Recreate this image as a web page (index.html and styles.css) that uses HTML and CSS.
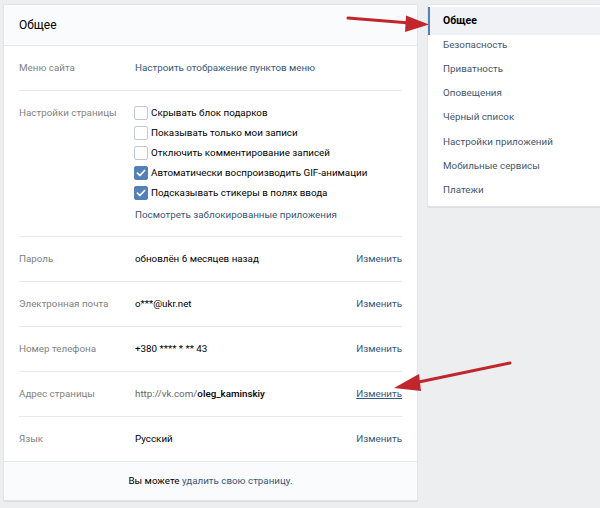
FILE: index.html
```html
<!DOCTYPE html>
<html lang="ru">
<head>
<meta charset="utf-8">
<title>Общее</title>
<link rel="stylesheet" href="styles.css">
</head>
<body>
<div class="page">
  <div class="main">
    <div class="header">Общее</div>
    <div class="rows">
      <div class="row">
        <div class="label">Меню сайта</div>
        <div class="value"><a class="link">Настроить отображение пунктов меню</a></div>
      </div>
      <div class="row row-checks">
        <div class="label">Настройки страницы</div>
        <div class="value">
          <div class="check"><span class="box"></span>Скрывать блок подарков</div>
          <div class="check"><span class="box"></span>Показывать только мои записи</div>
          <div class="check"><span class="box"></span>Отключить комментирование записей</div>
          <div class="check"><span class="box on"><svg viewBox="0 0 14 14" width="14" height="14"><path d="M3.4 7.1 L5.9 9.5 L10.6 4.5" fill="none" stroke="#fff" stroke-width="1.7" stroke-linecap="round" stroke-linejoin="round"/></svg></span>Автоматически воспроизводить GIF-анимации</div>
          <div class="check"><span class="box on"><svg viewBox="0 0 14 14" width="14" height="14"><path d="M3.4 7.1 L5.9 9.5 L10.6 4.5" fill="none" stroke="#fff" stroke-width="1.7" stroke-linecap="round" stroke-linejoin="round"/></svg></span>Подсказывать стикеры в полях ввода</div>
          <div class="blocked"><a class="link">Посмотреть заблокированные приложения</a></div>
        </div>
      </div>
      <div class="row">
        <div class="label">Пароль</div>
        <div class="value">обновлён 6 месяцев назад</div>
        <a class="link change">Изменить</a>
      </div>
      <div class="row">
        <div class="label">Электронная почта</div>
        <div class="value">o***@ukr.net</div>
        <a class="link change">Изменить</a>
      </div>
      <div class="row">
        <div class="label">Номер телефона</div>
        <div class="value">+380 **** * ** 43</div>
        <a class="link change">Изменить</a>
      </div>
      <div class="row">
        <div class="label">Адрес страницы</div>
        <div class="value"><span class="muted">http://vk.com/</span><span class="strong">oleg_kaminskiy</span></div>
        <a class="link change underlined">Изменить</a>
      </div>
      <div class="row">
        <div class="label">Язык</div>
        <div class="value">Русский</div>
        <a class="link change">Изменить</a>
      </div>
    </div>
    <div class="footer">Вы можете <a class="link">удалить свою страницу</a>.</div>
  </div>
  <div class="menu">
    <div class="item active">Общее</div>
    <div class="item">Безопасность</div>
    <div class="item">Приватность</div>
    <div class="item">Оповещения</div>
    <div class="item">Чёрный список</div>
    <div class="item">Настройки приложений</div>
    <div class="item">Мобильные сервисы</div>
    <div class="item">Платежи</div>
  </div>
</div>
<svg class="arrows" width="600" height="508" viewBox="0 0 600 508">
  <line x1="348" y1="18" x2="410" y2="23" stroke="#c0262c" stroke-width="3" stroke-linecap="round"/>
  <polygon points="429,24.5 406,15.5 405,32" fill="#c0262c"/>
  <line x1="510" y1="363" x2="414" y2="383" stroke="#c0262c" stroke-width="3" stroke-linecap="round"/>
  <polygon points="394,388 419,374 421,391" fill="#c0262c"/>
</svg>
</body>
</html>
```

FILE: styles.css
```css
html, body {
  margin: 0;
  padding: 0;
}
body {
  background: #edeef0;
  font-family: Roboto, "Noto Sans", sans-serif;
  font-size: 9.8px;
  color: #000;
  width: 600px;
  height: 508px;
  overflow: hidden;
  position: relative;
}
.page {
  display: flex;
  align-items: flex-start;
  gap: 9px;
  padding: 4px 0 0 3px;
}
.main {
  width: 413px;
  flex: none;
  background: #fff;
  border: 1px solid #e3e4e8;
  border-radius: 2px;
  box-shadow: 0 1px 0 #dcdee3;
}
.header {
  height: 40px;
  line-height: 40px;
  padding-left: 15px;
  font-size: 12px;
  color: #000;
  background: #fafbfc;
  border-bottom: 1px solid #e7e8ec;
}
.rows {
  padding: 0 15px;
}
.row {
  display: flex;
  align-items: flex-start;
  padding: 13px 0 14px 0;
  line-height: 17px;
  border-top: 1px solid #e7e8ec;
}
.rows .row:first-child {
  border-top: none;
  padding-top: 13px;
  padding-bottom: 14px;
}
.label {
  width: 116px;
  flex: none;
  color: #828282;
}
.value {
  flex: 1;
  color: #000;
}
.link {
  color: #36577a;
  text-decoration: none;
}
.change {
  flex: none;
}
.underlined {
  text-decoration: underline;
}
.muted {
  color: #656565;
}
.strong {
  font-weight: 500;
}
.row-checks {
  padding: 12px 0 11px 0;
  line-height: 20px;
}
.row-checks .label {
  line-height: 20px;
}
.check {
  display: flex;
  align-items: center;
  height: 20px;
}
.box {
  width: 12px;
  height: 12px;
  border: 1px solid #c1c9d1;
  border-radius: 2px;
  background: #fff;
  margin-right: 3px;
  margin-left: -1px;
  flex: none;
  position: relative;
}
.box.on {
  background: #5181b8;
  border-color: #5181b8;
}
.box svg {
  position: absolute;
  left: -1px;
  top: -1px;
}
.blocked {
  margin-top: 2px;
  line-height: 20px;
}
.footer {
  height: 38px;
  line-height: 38px;
  text-align: center;
  background: #fafbfc;
  border-top: 1px solid #e7e8ec;
  color: #000;
}
.menu {
  width: 200px;
  flex: none;
  background: #fff;
  border: 1px solid #e3e4e8;
  border-radius: 2px;
  box-shadow: 0 1px 0 #dcdee3;
  padding: 4px 0 4px 0;
}
.item {
  height: 24.15px;
  line-height: 24px;
  padding-left: 13px;
  color: #45566b;
  border-left: 2px solid transparent;
}
.item.active {
  margin: -2px 0;
  height: 28px;
  line-height: 28px;
  background: #f0f2f5;
  border-left-color: #5181b8;
  font-weight: 700;
  color: #000;
  font-size: 10.5px;
}
.arrows {
  position: absolute;
  left: 0;
  top: 0;
  pointer-events: none;
}
```
